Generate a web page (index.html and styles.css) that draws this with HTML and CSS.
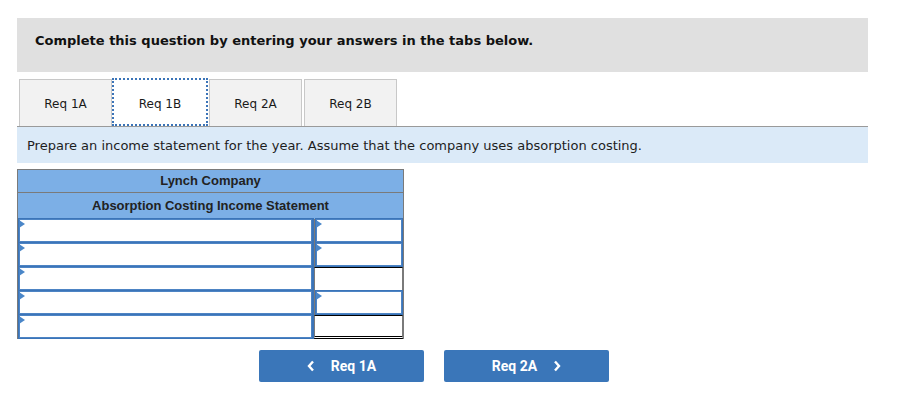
FILE: index.html
```html
<!DOCTYPE html>
<html>
<head>
<meta charset="utf-8">
<link rel="stylesheet" href="styles.css">
</head>
<body>
<div class="page">
  <div class="banner">Complete this question by entering your answers in the tabs below.</div>
  <div class="tabs">
    <div class="tab">Req 1A</div>
    <div class="tab active">Req 1B</div>
    <div class="tab">Req 2A</div>
    <div class="tab">Req 2B</div>
  </div>
  <div class="instr">Prepare an income statement for the year. Assume that the company uses absorption costing.</div>
  <div class="stmt">
    <div class="hrow first">Lynch Company</div>
    <div class="hrow">Absorption Costing Income Statement</div>
    <div class="body">
      <div class="inp"></div><div class="inp"></div>
      <div class="inp"></div><div class="inp"></div>
      <div class="inp"></div><div class="cell total"></div>
      <div class="inp"></div><div class="inp"></div>
      <div class="inp"></div><div class="cell total dbl"></div>
    </div>
  </div>
  <div class="nav">
    <button class="btn"><svg class="chev" viewBox="0 0 8 12"><polyline points="6,1.5 2,6 6,10.5"/></svg><span>Req 1A</span></button>
    <button class="btn"><span>Req 2A</span><svg class="chev" viewBox="0 0 8 12"><polyline points="2,1.5 6,6 2,10.5"/></svg></button>
  </div>
</div>
</body>
</html>
```

FILE: styles.css
```css
html, body {
  margin: 0;
  padding: 0;
  background: #fff;
}
.page {
  padding: 18px 0 0 17px;
  width: 851px;
  font-family: "DejaVu Sans", Verdana, sans-serif;
  color: #1a1a1a;
}
.banner {
  background: #e0e0e0;
  height: 54px;
  box-sizing: border-box;
  padding: 15px 18px 0;
  font-weight: bold;
  font-size: 13px;
  color: #111;
}
.tabs {
  display: flex;
  margin-top: 7px;
  padding-left: 2px;
  border-bottom: 1px solid #9a9a9a;
  height: 47px;
}
.tab {
  width: 93px;
  height: 47px;
  box-sizing: border-box;
  background: #f2f2f2;
  border: 1px solid #c8c8c8;
  border-bottom: none;
  font-size: 12px;
  display: flex;
  align-items: center;
  justify-content: center;
  padding-top: 1px;
}
.tab.active {
  width: 96px;
  background: #fff;
  border: 2px dotted #3b74b8;
  margin-right: 1px;
  height: 48px;
  margin-top: -1px;
  padding-top: 3px;
}
.tab:nth-child(4) { margin-left: 2px; }
.instr {
  background: #dbeaf8;
  height: 36px;
  box-sizing: border-box;
  padding: 11px 10px 0;
  font-size: 13px;
  color: #1e1e1e;
}
.stmt {
  margin-top: 6px;
  width: 387px;
  box-sizing: border-box;
  border: 1px solid #7a7a7a;
  border-bottom: none;
  font-family: "Liberation Sans", Arial, sans-serif;
}
.hrow {
  background: #7cafe6;
  text-align: center;
  font-weight: bold;
  font-size: 13px;
  color: #222;
  height: 26px;
  box-sizing: border-box;
  padding-top: 5px;
}
.hrow.first {
  height: 23px;
  padding-top: 3px;
  border-bottom: 1px solid #7a7a7a;
}
.body {
  display: grid;
  grid-template-columns: 296px 89px;
  grid-auto-rows: 24px;
  background: linear-gradient(to right, transparent 296px, #7a7a7a 296px, #7a7a7a 297px, transparent 297px);
}
.inp {
  position: relative;
  border: 1px solid #3b74b8;
  background: #fff;
  box-shadow: inset 0 0 0 1px #4d84c4;
  margin-top: -1px;
}
.inp:nth-child(odd) {
  border-right: 2px solid #3b74b8;
}
.inp:nth-child(even) {
  margin-left: 1px;
}
.inp::before {
  content: "";
  position: absolute;
  left: 0;
  top: 1px;
  border-left: 6px solid #4a86c8;
  border-top: 4px solid transparent;
  border-bottom: 4px solid transparent;
}
.cell.total {
  background: #fff;
  border-top: 1px solid #000;
  border-right: 1px solid #7a7a7a;
  border-left: 1px solid #7a7a7a;
}
.cell.dbl {
  border-bottom: 3px double #000;
}
.nav {
  display: flex;
  gap: 20px;
  padding-left: 242px;
  margin-top: 11px;
}
.btn {
  width: 165px;
  height: 32px;
  background: #3a76b9;
  border: none;
  border-radius: 2px;
  color: #fff;
  font-family: Roboto, "Liberation Sans", sans-serif;
  font-weight: bold;
  font-size: 14px;
  display: flex;
  align-items: center;
  justify-content: center;
  gap: 16px;
  padding: 0;
}
.chev {
  width: 8px;
  height: 12px;
  fill: none;
  stroke: #fff;
  stroke-width: 2.4;
}
```
